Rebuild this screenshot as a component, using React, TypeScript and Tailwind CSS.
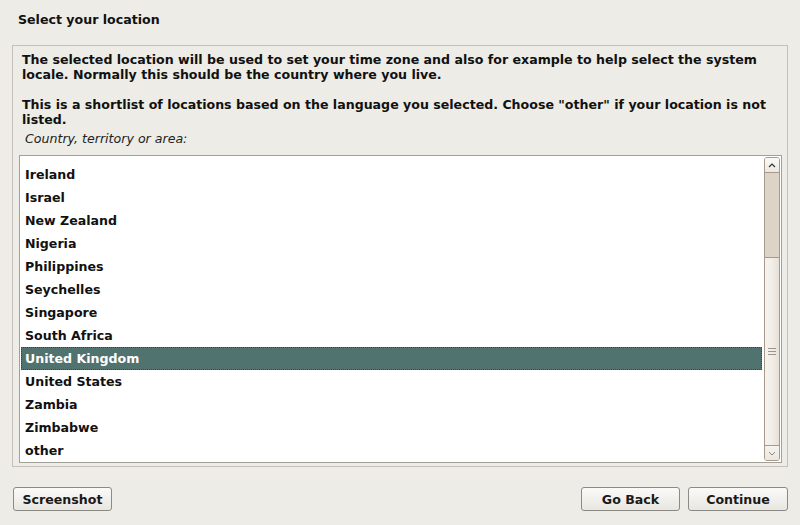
import React from "react";

const items = [
  "Ireland",
  "Israel",
  "New Zealand",
  "Nigeria",
  "Philippines",
  "Seychelles",
  "Singapore",
  "South Africa",
  "United Kingdom",
  "United States",
  "Zambia",
  "Zimbabwe",
  "other",
];

function Btn({ label, className = "" }: { label: string; className?: string }) {
  return (
    <button
      className={
        "h-[24px] rounded-[3px] border border-[#8c8a85] bg-gradient-to-b from-[#fbfaf8] to-[#e8e6e0] pt-[1px] text-[12.6px] font-bold leading-[21px] text-[#1a1a1a] " +
        className
      }
    >
      {label}
    </button>
  );
}

export default function App() {
  return (
    <div
      className="w-[800px] h-[525px] bg-[#edece6] text-[#111] flex flex-col overflow-hidden"
      style={{ fontFamily: '"DejaVu Sans", sans-serif' }}
    >
      <div className="h-[45px] pl-[18px] pt-[11px] text-[12.6px] font-bold leading-[18px]">
        Select your location
      </div>
      <div className="ml-[12px] w-[776px] h-[422px] border border-[#c4c1b9] flex flex-col pl-[9px] pr-[6px]">
        <div className="pt-[6px] text-[12.6px] font-bold leading-[15px]">
          <p>
            The selected location will be used to set your time zone and also for example to help select the system
            locale. Normally this should be the country where you live.
          </p>
          <p className="mt-[15px]">
            This is a shortlist of locations based on the language you selected. Choose "other" if your location is not
            listed.
          </p>
        </div>
        <div className="pl-[3px] pt-[3px] text-[12.6px] italic leading-[18px] text-[#222]">
          Country, territory or area:
        </div>
        <div className="-ml-[3px] mt-[7px] h-[308px] w-[763px] border border-[#a3a098] bg-white flex">
          <div className="flex-1 pt-[7px] pl-[1px] pr-[2px]">
            {items.map((it) => {
              const sel = it === "United Kingdom";
              return (
                <div
                  key={it}
                  className={
                    "h-[23px] pl-[4px] text-[12.6px] font-bold leading-[23px] " +
                    (sel
                      ? "bg-[#51736f] text-white outline outline-1 outline-dotted outline-[#2e4a47] -outline-offset-1"
                      : "text-[#111]")
                  }
                >
                  {it}
                </div>
              );
            })}
          </div>
          <div className="w-[16px] my-[1px] mr-[1px] flex flex-col border border-[#a69a8b] rounded-[3px] overflow-hidden">
            <div className="h-[15px] border-b border-[#a69a8b] bg-gradient-to-b from-[#fbfaf7] to-[#ece8e0] flex items-center justify-center">
              <svg width="8" height="5" viewBox="0 0 8 5">
                <path d="M1 4 L4 1 L7 4" fill="none" stroke="#333" strokeWidth="1.2" />
              </svg>
            </div>
            <div className="h-[84px] bg-[#ddd4c7]" />
            <div className="flex-1 border-t border-[#a69a8b] bg-gradient-to-r from-[#f6f3ee] via-[#f1eee8] to-[#e6e0d6] flex items-center justify-center">
              <div className="flex flex-col gap-[2px]">
                <div className="w-[8px] h-[1px] bg-[#9c958b]" />
                <div className="w-[8px] h-[1px] bg-[#9c958b]" />
                <div className="w-[8px] h-[1px] bg-[#9c958b]" />
              </div>
            </div>
            <div className="h-[15px] border-t border-[#a69a8b] bg-gradient-to-b from-[#f6f3ee] to-[#ebe7df] flex items-center justify-center">
              <svg width="8" height="5" viewBox="0 0 8 5">
                <path d="M1 1 L4 4 L7 1" fill="none" stroke="#888" strokeWidth="1" />
              </svg>
            </div>
          </div>
        </div>
      </div>
      <div className="flex items-center px-[12px] pt-[20px]">
        <Btn label="Screenshot" className="w-[99px] ml-[1px]" />
        <div className="flex-1" />
        <Btn label="Go Back" className="w-[99px]" />
        <Btn label="Continue" className="w-[100px] ml-[8px]" />
      </div>
    </div>
  );
}
